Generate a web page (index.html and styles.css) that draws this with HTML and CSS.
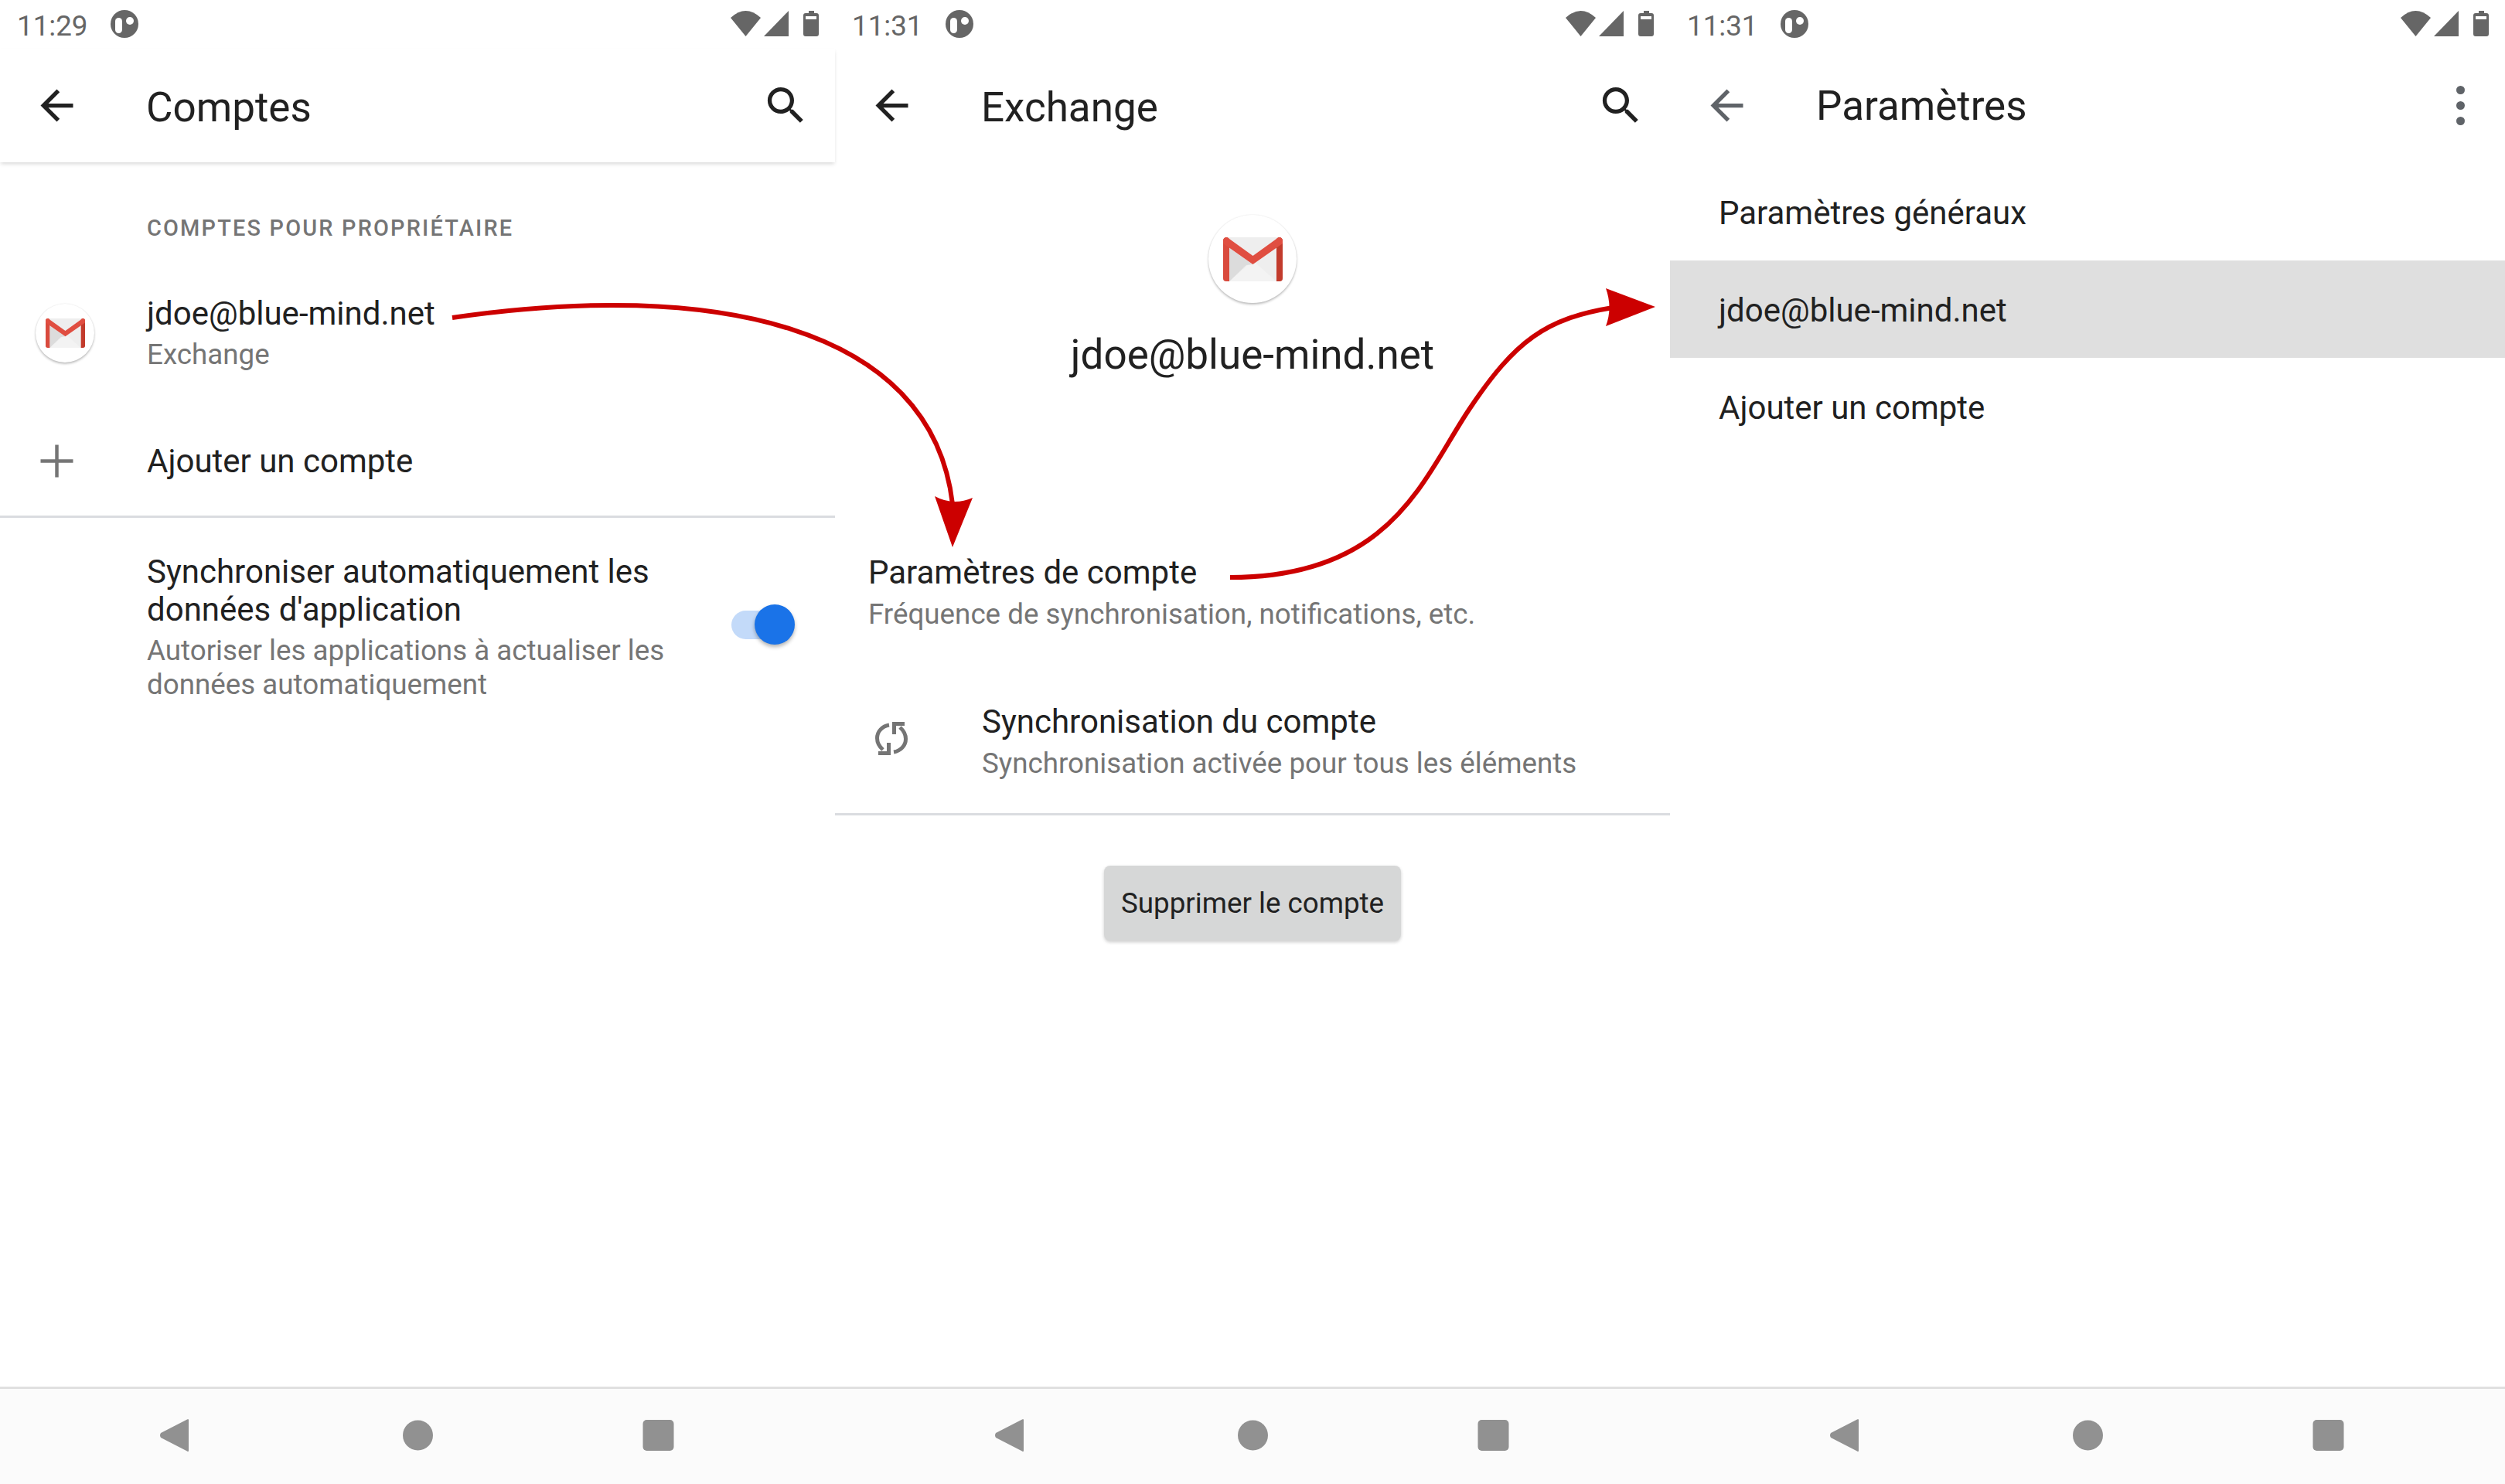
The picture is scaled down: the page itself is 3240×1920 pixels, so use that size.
FILE: index.html
```html
<!DOCTYPE html>
<html lang="fr">

<head>
    <meta charset="UTF-8">
    <title>Comptes</title>
    <link rel="stylesheet" href="styles.css">
</head>

<body>
    <!-- Shared icons -->
    <svg class="defs" width="0" height="0">
        <symbol id="i-dot" viewBox="0 0 36 36">
            <circle cx="18" cy="18" r="18" fill="#666666" />
            <rect x="6" y="10" width="9" height="20" rx="4.5" fill="#ffffff" />
            <circle cx="25" cy="14" r="5" fill="#ffffff" />
        </symbol>
        <symbol id="i-status" viewBox="0 0 114 33">
            <path d="M19.5 33L0 9Q19.5 -9 39 9Z" fill="#666666" />
            <path d="M43 33H75V0Z" fill="#666666" />
            <path d="M101 0H108V3H111Q114 3 114 6V30Q114 33 111 33H97Q94 33 94 30V6Q94 3 97 3H101Z" fill="#666666" />
            <rect x="97" y="7" width="14" height="4" fill="#ffffff" />
        </symbol>
        <symbol id="i-back" viewBox="0 0 24 24">
            <path d="M20 11H7.83l5.59-5.59L12 4l-8 8 8 8 1.41-1.41L7.83 13H20v-2z" />
        </symbol>
        <symbol id="i-search" viewBox="0 0 24 24">
            <path d="M15.5 14h-.79l-.28-.27C15.41 12.59 16 11.11 16 9.5 16 5.91 13.09 3 9.5 3S3 5.91 3 9.5 5.91 16 9.5 16c1.61 0 3.09-.59 4.23-1.57l.27.28v.79l5 4.99L20.49 19l-4.99-5zm-6 0C7.01 14 5 11.99 5 9.5S7.01 5 9.5 5 14 7.01 14 9.5 11.99 14 9.5 14z" />
        </symbol>
        <symbol id="i-gmail" viewBox="0 0 77 57">
            <rect width="77" height="57" rx="4" fill="#eeeeee" />
            <path d="M8 57L38.5 30L69 57Z" fill="#f3f3f3" />
            <path d="M8 14L38.5 35L30 36L8 57Z" fill="#dcdcdc" />
            <path d="M0 5Q0 0 5 0L8 2V57H4Q0 57 0 53Z" fill="#d94a3d" />
            <path d="M77 5Q77 0 72 0L69 2V57H73Q77 57 77 53Z" fill="#c23b2c" />
            <path d="M0 5Q0 0 5 0Q6 0 8 2L38.5 24L69 2Q71 0 72 0Q77 0 77 5V8L38.5 35L0 8Z" fill="#e04e41" />
        </symbol>
        <symbol id="i-sync" viewBox="0 0 42 43">
            <g fill="none" stroke="#757575" stroke-width="5">
                <path d="M18 4C9 5.500 2.500 12.500 2.500 21C2.500 27 5.500 32 10 36" />
                <path d="M17.500 27V40.500H4" />
                <g transform="rotate(180 21 21.500)">
                    <path d="M18 4C9 5.500 2.500 12.500 2.500 21C2.500 27 5.500 32 10 36" />
                    <path d="M17.500 27V40.500H4" />
                </g>
            </g>
        </symbol>
        <symbol id="i-nav" viewBox="0 0 693 63">
            <path d="M50 10.500V49.500Q50 52 48 50.500L14 33Q12 30 14 27L48 9.500Q50 8 50 10.500Z" />
            <circle cx="346.500" cy="30" r="19.500" />
            <rect x="637.500" y="10" width="40" height="40" rx="5" />
        </symbol>
    </svg>

    <div class="screens">

        <!-- Comptes -->
        <section class="screen">
            <div class="status">
                <span class="time">11:29</span>
                <svg class="status-dot"><use href="#i-dot" /></svg>
                <svg class="status-icons"><use href="#i-status" /></svg>
            </div>
            <header class="toolbar toolbar-raised">
                <svg class="tool-icon"><use href="#i-back" /></svg>
                <h1 class="tool-title">Comptes</h1>
                <svg class="tool-icon tool-end"><use href="#i-search" /></svg>
            </header>

            <h2 class="section-label">Comptes pour propriétaire</h2>

            <div class="row row-account">
                <div class="row-lead">
                    <div class="avatar avatar-small"><svg><use href="#i-gmail" /></svg></div>
                </div>
                <div>
                    <p class="item-title">jdoe@blue-mind.net</p>
                    <p class="item-sub">Exchange</p>
                </div>
            </div>

            <div class="row row-add divider">
                <div class="row-lead row-lead-icon">
                    <svg class="plain-icon" viewBox="0 0 24 24">
                        <path d="M4 12H20M12 4V20" fill="none" stroke="#757575" stroke-width="1.700" />
                    </svg>
                </div>
                <p class="item-title">Ajouter un compte</p>
            </div>

            <div class="row row-sync">
                <div class="row-lead"></div>
                <div class="sync-text">
                    <p class="item-title item-title-tall">Synchroniser automatiquement les données d'application</p>
                    <p class="item-sub item-sub-gap">Autoriser les applications à actualiser les données automatiquement</p>
                </div>
                <div class="toggle"><span class="toggle-thumb"></span></div>
            </div>

            <footer class="navbar"><svg><use href="#i-nav" /></svg></footer>
        </section>

        <!-- Exchange -->
        <section class="screen">
            <div class="status">
                <span class="time">11:31</span>
                <svg class="status-dot"><use href="#i-dot" /></svg>
                <svg class="status-icons"><use href="#i-status" /></svg>
            </div>
            <header class="toolbar">
                <svg class="tool-icon"><use href="#i-back" /></svg>
                <h1 class="tool-title">Exchange</h1>
                <svg class="tool-icon tool-end"><use href="#i-search" /></svg>
            </header>

            <div class="profile">
                <div class="avatar avatar-large"><svg><use href="#i-gmail" /></svg></div>
                <p class="profile-name">jdoe@blue-mind.net</p>
            </div>

            <div class="row-settings">
                <p class="item-title">Paramètres de compte</p>
                <p class="item-sub item-sub-gap">Fréquence de synchronisation, notifications, etc.</p>
            </div>

            <div class="row row-account-sync divider">
                <div class="row-lead row-lead-icon">
                    <svg class="sync-icon"><use href="#i-sync" /></svg>
                </div>
                <div>
                    <p class="item-title">Synchronisation du compte</p>
                    <p class="item-sub item-sub-gap">Synchronisation activée pour tous les éléments</p>
                </div>
            </div>

            <div class="remove-wrap">
                <button class="remove-btn">Supprimer le compte</button>
            </div>

            <footer class="navbar"><svg><use href="#i-nav" /></svg></footer>
        </section>

        <!-- Parametres -->
        <section class="screen">
            <div class="status">
                <span class="time">11:31</span>
                <svg class="status-dot"><use href="#i-dot" /></svg>
                <svg class="status-icons"><use href="#i-status" /></svg>
            </div>
            <header class="toolbar toolbar-muted">
                <svg class="tool-icon"><use href="#i-back" /></svg>
                <h1 class="tool-title">Paramètres</h1>
                <svg class="tool-icon tool-more" viewBox="0 0 63 63">
                    <circle cx="31.500" cy="11.500" r="5.500" />
                    <circle cx="31.500" cy="31.500" r="5.500" />
                    <circle cx="31.500" cy="51.500" r="5.500" />
                </svg>
            </header>

            <ul class="menu">
                <li class="menu-item">Paramètres généraux</li>
                <li class="menu-item menu-item-active">jdoe@blue-mind.net</li>
                <li class="menu-item">Ajouter un compte</li>
            </ul>

            <footer class="navbar"><svg><use href="#i-nav" /></svg></footer>
        </section>
    </div>

    <!-- Red annotation arrows drawn over the screens -->
    <svg class="arrows" viewBox="0 0 3240 1920">
        <path d="M585 411C920 362 1205 420 1232 652" fill="none" stroke="#cc0000" stroke-width="6" />
        <path d="M1209 642Q1233 655 1258 644L1232 708Z" fill="#cc0000" />
        <path d="M1591 747C1800 747 1840 620 1900 530C1960 440 2000 412 2086 398" fill="none" stroke="#cc0000" stroke-width="6" />
        <path d="M2077 373L2141 397L2077 422Q2086 398 2077 373Z" fill="#cc0000" />
    </svg>
</body>

</html>
```

FILE: styles.css
```css
/* Page */
body {
    margin: 0;
    background-color: #ffffff;
    font-family: Roboto, "Liberation Sans", sans-serif;
    color: #212121;
}

p,
h1,
h2,
ul {
    margin: 0;
    padding: 0;
}

.defs {
    display: block;
}

.screens {
    display: flex;
    width: 3240px;
    height: 1920px;
    overflow: hidden;
}

.screen {
    display: flex;
    flex-direction: column;
    width: 1080px;
    height: 1920px;
}

/* Status bar */
.status {
    display: flex;
    align-items: center;
    flex-shrink: 0;
    height: 63px;
    padding: 0 21px 0 22px;
    color: #666666;
}

.time {
    width: 121px;
    padding-top: 3px;
    font-size: 36.750px;
    line-height: 63px;
}

.status-dot {
    width: 36px;
    height: 36px;
    margin-bottom: 1px;
}

.status-icons {
    width: 114px;
    height: 33px;
    margin-left: auto;
    margin-bottom: 2px;
}

/* Toolbar */
.toolbar {
    display: flex;
    align-items: center;
    flex-shrink: 0;
    height: 147px;
    fill: #212121;
}

.toolbar-raised {
    box-shadow: 0 3px 5px -1px rgba(0, 0, 0, 0.16);
}

.toolbar-muted {
    fill: #5f6368;
}

.tool-icon {
    flex-shrink: 0;
    width: 63px;
    height: 63px;
    margin-left: 42px;
}

.tool-end {
    margin-left: auto;
    margin-right: 32px;
}

.tool-more {
    margin-left: auto;
    margin-right: 26px;
}

.tool-title {
    margin-top: 5px;
    margin-left: 84px;
    font-size: 53px;
    font-weight: 400;
    line-height: 62px;
}

.toolbar-muted .tool-title {
    margin-top: 0;
}

/* List rows */
.section-label {
    padding: 65px 0 0 190px;
    font-size: 28.875px;
    font-weight: 500;
    line-height: 40px;
    letter-spacing: 2.200px;
    text-transform: uppercase;
    color: #757575;
}

.row {
    display: flex;
    align-items: center;
}

.row-lead {
    display: flex;
    justify-content: center;
    flex-shrink: 0;
    width: 190px;
    padding-right: 22px;
    box-sizing: border-box;
}

/* Lead icons that sit on the 16dp keyline */
.row-lead-icon {
    justify-content: flex-start;
    padding-left: 42px;
    padding-right: 0;
}

.row-account {
    padding: 66px 0 41px;
}

.row-add {
    padding: 43px 0 39px;
}

.row-sync {
    padding-top: 45px;
}

.divider {
    border-bottom: 3px solid #dadce0;
}

.sync-text {
    width: 700px;
}

.plain-icon {
    width: 63px;
    height: 63px;
}

.item-title {
    font-size: 42px;
    line-height: 50px;
}

.item-title-tall {
    line-height: 49px;
}

.item-sub {
    margin-top: 6px;
    font-size: 36.750px;
    line-height: 44px;
    color: #757575;
}

.item-sub-gap {
    margin-top: 7px;
}

/* Gmail badge */
.avatar {
    display: flex;
    align-items: center;
    justify-content: center;
    border-radius: 50%;
    background-color: #ffffff;
    box-shadow: 0 2px 3px rgba(0, 0, 0, 0.24), 0 0 2px rgba(0, 0, 0, 0.1);
}

.avatar-small {
    width: 76px;
    height: 76px;
}

.avatar-small svg {
    width: 51px;
    height: 38px;
}

.avatar-large {
    width: 114px;
    height: 114px;
}

.avatar-large svg {
    width: 77px;
    height: 57px;
}

/* Switch */
.toggle {
    position: relative;
    width: 71px;
    height: 37px;
    margin-left: 56px;
    margin-top: -7px;
    border-radius: 19px;
    background-color: #c3daf9;
}

.toggle-thumb {
    position: absolute;
    top: -8px;
    left: 30px;
    width: 52px;
    height: 52px;
    border-radius: 50%;
    background-color: #1a73e8;
    box-shadow: 0 3px 5px rgba(0, 0, 0, 0.3);
}

/* Account screen */
.profile {
    display: flex;
    flex-direction: column;
    align-items: center;
    padding-top: 68px;
}

.profile-name {
    margin-top: 36px;
    font-size: 53px;
    line-height: 62px;
}

.row-settings {
    padding: 226px 0 0 43px;
}

.row-account-sync {
    padding: 92px 0 42px;
}

.sync-icon {
    width: 42px;
    height: 43px;
    margin-left: 10px;
    margin-bottom: 8px;
}

.remove-wrap {
    display: flex;
    justify-content: center;
    padding-top: 65px;
}

.remove-btn {
    width: 384px;
    height: 97px;
    padding: 0;
    border: none;
    border-radius: 8px;
    background-color: #d6d7d7;
    box-shadow: 0 2px 4px rgba(0, 0, 0, 0.2);
    font-family: inherit;
    font-size: 36.750px;
    color: #212121;
}

/* Settings menu */
.menu {
    padding-top: 1px;
    list-style: none;
}

.menu-item {
    display: flex;
    align-items: center;
    box-sizing: border-box;
    height: 126px;
    padding: 2px 0 0 63px;
    font-size: 42px;
}

.menu-item-active {
    background-color: #dfdfdf;
}

/* Navigation bar */
.navbar {
    display: flex;
    align-items: center;
    justify-content: center;
    margin-top: auto;
    height: 123px;
    border-top: 3px solid #e0e0e0;
    background-color: #fbfbfb;
    fill: #919191;
}

.navbar svg {
    width: 693px;
    height: 63px;
}

/* Annotation arrows */
.arrows {
    position: absolute;
    top: 0;
    left: 0;
    width: 3240px;
    height: 1920px;
}
```
